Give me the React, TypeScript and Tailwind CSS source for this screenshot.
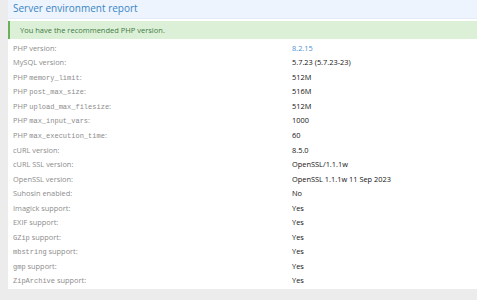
const mono = "font-['Liberation_Mono',monospace] text-[7px]";

const rows: { label: React.ReactNode; value: string; link?: boolean }[] = [
  { label: 'PHP version:', value: '8.2.15', link: true },
  { label: 'MySQL version:', value: '5.7.23 (5.7.23-23)' },
  { label: <>PHP <code className={mono}>memory_limit</code>:</>, value: '512M' },
  { label: <>PHP <code className={mono}>post_max_size</code>:</>, value: '516M' },
  { label: <>PHP <code className={mono}>upload_max_filesize</code>:</>, value: '512M' },
  { label: <>PHP <code className={mono}>max_input_vars</code>:</>, value: '1000' },
  { label: <>PHP <code className={mono}>max_execution_time</code>:</>, value: '60' },
  { label: 'cURL version:', value: '8.5.0' },
  { label: 'cURL SSL version:', value: 'OpenSSL/1.1.1w' },
  { label: 'OpenSSL version:', value: 'OpenSSL 1.1.1w 11 Sep 2023' },
  { label: 'Suhosin enabled:', value: 'No' },
  { label: 'Imagick support:', value: 'Yes' },
  { label: 'EXIF support:', value: 'Yes' },
  { label: <><code className={mono}>GZip</code> support:</>, value: 'Yes' },
  { label: <><code className={mono}>mbstring</code> support:</>, value: 'Yes' },
  { label: <><code className={mono}>gmp</code> support:</>, value: 'Yes' },
  { label: <><code className={mono}>ZipArchive</code> support:</>, value: 'Yes' },
];

export default function App() {
  return (
    <div className="w-[477px] h-[300px] bg-[#ececec] pl-[8px] overflow-hidden font-['Open_Sans',sans-serif]">
      <div className="bg-white h-[289px] flex flex-col">
        <div className="h-[19px] shrink-0 bg-[#edf4fd] border-b border-[#e3ecf6] pl-[5px] text-[10px] leading-[17px] text-[#3b84c4]">
          Server environment report
        </div>
        <div className="mt-[2px] h-[18px] shrink-0 bg-[#dcf0d8] border-l-2 border-[#6bb05a] pl-[10px] text-[7.5px] leading-[18px] text-[#3f7a3f]">
          You have the recommended PHP version.
        </div>
        <div className="pt-[2px] text-[7.4px]">
          {rows.map((r, i) => (
            <div key={i} className="flex items-center h-[14.56px]">
              <div className="w-[284px] shrink-0 pl-[5px] text-[#8c8c8c] whitespace-nowrap">{r.label}</div>
              <div className={r.link ? 'text-[#4a90cf]' : 'text-[#141414]'}>{r.value}</div>
            </div>
          ))}
        </div>
      </div>
    </div>
  );
}
